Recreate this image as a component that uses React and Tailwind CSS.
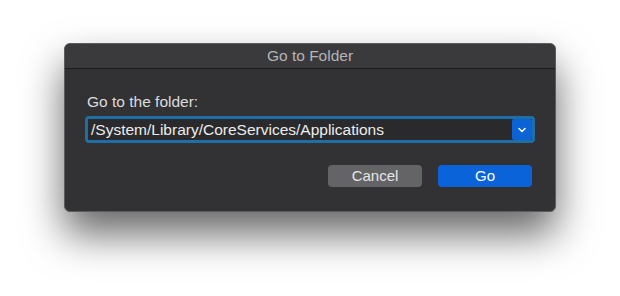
import { ChevronDown } from 'lucide-react'

export default function App() {
  return (
    <div className="h-[296px] w-[620px] bg-white pl-[64px] pt-[43px] font-['Liberation_Sans',sans-serif]">
      <div className="w-[492px] h-[169px] rounded-[6px] border border-[#5c5c5e] bg-[#323235] shadow-[0_22px_40px_rgba(0,0,0,0.6)] overflow-hidden flex flex-col">
        {/* title bar */}
        <div className="h-[25px] shrink-0 flex items-center justify-center bg-[#3a3a3d] border-b border-[#1c1c1e] text-[15.5px] text-[#b4b4b6]">
          Go to Folder
        </div>

        <div className="flex flex-col px-[20px] pt-[23px]">
          <div className="pl-[2px] text-[15.5px] leading-[20px] text-[#dcdcdc]">Go to the folder:</div>

          <div className="mt-[4px] flex h-[27px] w-[450px] rounded-[4px] border-[3px] border-[#1f6fa5] bg-[#2a2a2d]">
            <div className="flex flex-1 items-center pl-[3px] text-[15.5px] text-[#ececec]">
              /System/Library/CoreServices/Applications
            </div>
            <div className="flex w-[20px] items-center justify-center rounded-[2px] bg-[#0b63d6] text-white">
              <ChevronDown size={12} strokeWidth={3} />
            </div>
          </div>

          <div className="mt-[22px] flex justify-end gap-[16px] pr-[3px]">
            <button type="button" className="h-[22px] w-[94px] rounded-[4px] bg-[#646466] text-[15px] text-[#e6e6e6]">
              Cancel
            </button>
            <button type="button" className="h-[22px] w-[94px] rounded-[4px] bg-[#0a63d8] text-[15px] text-white">
              Go
            </button>
          </div>
        </div>
      </div>
    </div>
  )
}
